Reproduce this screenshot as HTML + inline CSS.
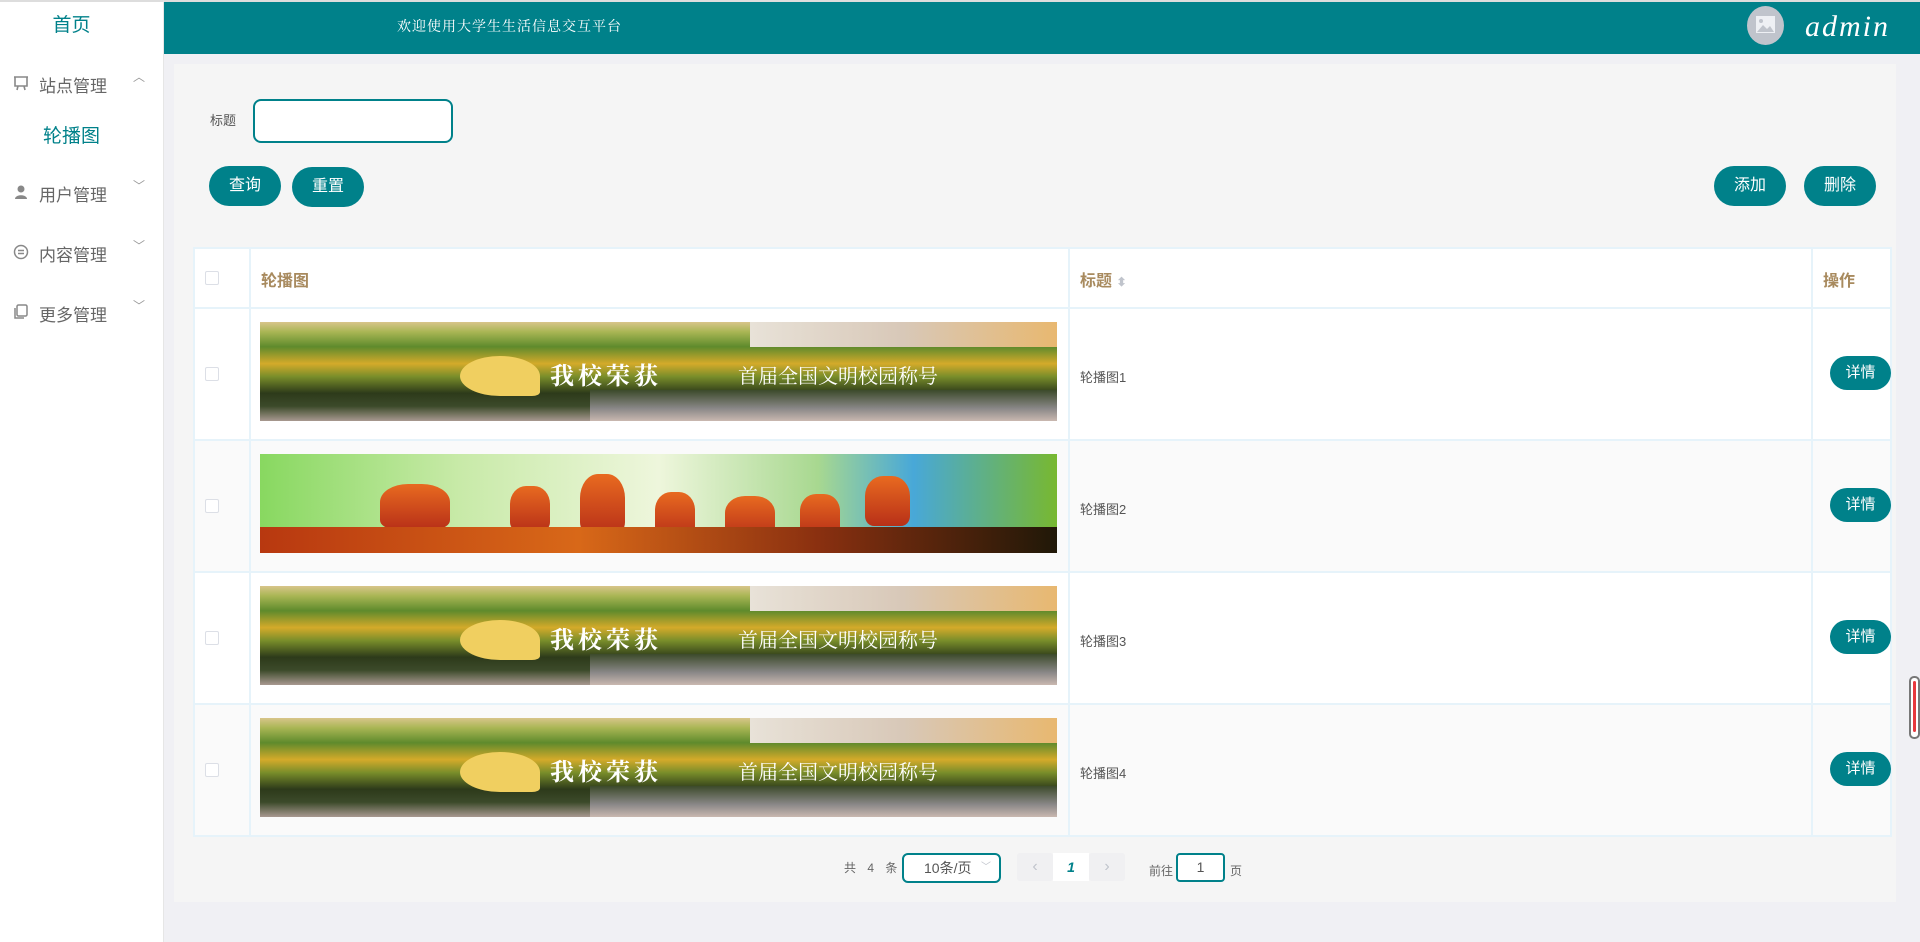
<!DOCTYPE html>
<html><head><meta charset="utf-8"><style>
*{margin:0;padding:0;box-sizing:border-box}
body{width:1920px;height:942px;overflow:hidden;background:#f0f0f4;font-family:"Liberation Sans","Noto Sans CJK SC",sans-serif;position:relative}
.a{position:absolute}
.side{left:0;top:0;width:164px;height:942px;background:#fff;border-right:1px solid #e6e6e6;border-top:2px solid #ddd}
.menu{left:0;width:164px;font-size:17px;color:#666}
.menu .ic{position:absolute;left:13px;top:3px;width:16px;height:16px}
.menu .t{position:absolute;left:39px;top:0}
.menu .ar{position:absolute;left:133px;top:-4px;font-size:12px;color:#999}
.hdr{left:164px;top:0;width:1756px;height:54px;background:#00818a;border-top:2px solid #ddd}
.btn{position:absolute;background:#00818a;color:#fff;border-radius:20px;font-size:16px;text-align:center;line-height:40px;width:72px;height:40px}
.panel{left:174px;top:64px;width:1722px;height:838px;background:#f5f5f5}
.tbl{left:193px;top:247px;width:1699px;border:2px solid #e6f3fa;background:#fff}
.row{position:absolute;left:0;width:1695px;border-bottom:2px solid #e6f3fa}
.vl{position:absolute;top:0;width:2px;height:100%;background:#e6f3fa}
.cb{position:absolute;left:12px;width:14px;height:14px;border:1px solid #dcdfe6;border-radius:2px;background:#fff}
.img{position:absolute;left:65px;width:797px;height:99px;overflow:hidden}
.campus{background:linear-gradient(180deg,#d8c58a 0%,#a9b654 10%,#5f8a2c 25%,#d4aa2a 42%,#7a8e2a 55%,#2d3a1a 72%,#3c4a2a 85%,#a89890 100%)}
.campus .gk{position:absolute;left:200px;top:34px;width:80px;height:40px;background:#f0cf60;border-radius:50% 50% 10% 50%}
.campus .tx{position:absolute;left:290px;top:34px;color:#fff;font-family:"Liberation Serif","Noto Serif CJK SC",serif;font-size:24px;font-weight:bold;letter-spacing:4px;white-space:nowrap}
.campus .tx2{position:absolute;left:478px;top:38px;color:#fff;font-family:"Liberation Serif","Noto Serif CJK SC",serif;font-size:20px;white-space:nowrap}
.campus .bld{position:absolute;left:490px;top:0;width:307px;height:25px;background:linear-gradient(90deg,#e8e2d8,#d8c8b8,#e8b870)}
.campus .water{position:absolute;left:330px;top:68px;width:467px;height:31px;background:linear-gradient(180deg,#3c4a2a,#8a8888 60%,#c9b8b0)}
.jump{background:linear-gradient(90deg,#88d860 0%,#c8eaa8 25%,#eef6dc 50%,#a8d890 70%,#48a8d8 82%,#78b830 100%)}
.jump .g{position:absolute;left:0;bottom:0;width:797px;height:26px;background:linear-gradient(90deg,#b83810,#d86818 40%,#8a3010 70%,#201808)}
.jump .p{position:absolute;background:linear-gradient(180deg,#e86a20,#b83018);border-radius:40% 40% 20% 20%}
.title{position:absolute;left:880px;font-size:13px;color:#555}
.det{position:absolute;left:1635px;width:61px;height:34px;border-radius:17px;background:#00818a;color:#fff;font-size:15px;line-height:34px;text-align:center}
.th{position:absolute;top:18px;font-size:16px;color:#a88a5e;font-weight:bold}
</style></head><body>
<div class="a side"></div>
<div class="a" style="left:0;top:10px;width:143px;text-align:center;font-size:19px;color:#00818a">首页</div>
<div class="a menu" style="top:72px">
<svg class="ic" viewBox="0 0 16 16"><path d="M1 2h14M2 2v9h12V2M5 11l-1 4M11 11l1 4" stroke="#888" stroke-width="1.6" fill="none"/></svg>
<span class="t">站点管理</span><span class="ar">︿</span></div>
<div class="a" style="left:0;top:121px;width:143px;text-align:center;font-size:19px;color:#00818a">轮播图</div>
<div class="a menu" style="top:181px">
<svg class="ic" viewBox="0 0 16 16"><circle cx="8" cy="5" r="3.5" fill="#888"/><path d="M2 15c0-5 12-5 12 0z" fill="#888"/></svg>
<span class="t">用户管理</span><span class="ar">﹀</span></div>
<div class="a menu" style="top:241px">
<svg class="ic" viewBox="0 0 16 16"><circle cx="8" cy="8" r="6.5" stroke="#888" stroke-width="1.5" fill="none"/><path d="M5 6.5h6M5 9.5h6" stroke="#888" stroke-width="1.4"/></svg>
<span class="t">内容管理</span><span class="ar">﹀</span></div>
<div class="a menu" style="top:301px">
<svg class="ic" viewBox="0 0 16 16"><rect x="4" y="1" width="10" height="11" rx="1.5" stroke="#888" stroke-width="1.5" fill="none"/><path d="M2 4v10h9" stroke="#888" stroke-width="1.5" fill="none"/></svg>
<span class="t">更多管理</span><span class="ar">﹀</span></div>

<div class="a hdr"></div>
<div class="a" style="left:397px;top:16px;color:#fff;font-size:14px;font-family:'Liberation Serif','Noto Serif CJK SC',serif;letter-spacing:1px">欢迎使用大学生生活信息交互平台</div>
<div class="a" style="left:1747px;top:6px;width:37px;height:39px;border-radius:50%;background:#c0c4cc"></div>
<svg class="a" style="left:1756px;top:16px" width="19" height="17" viewBox="0 0 19 17"><rect width="19" height="17" fill="#eef0f4"/><circle cx="5" cy="5" r="2" fill="#c0c4cc"/><path d="M1 16l6-7 4 4 3-3 4 6z" fill="#c0c4cc"/></svg>
<div class="a" style="left:1805px;top:10px;color:#fff;font-size:30px;font-style:italic;font-family:'Liberation Serif',serif;letter-spacing:2px">admin</div>

<div class="a panel"></div>
<div class="a" style="left:210px;top:110px;font-size:13px;color:#555">标题</div>
<div class="a" style="left:253px;top:99px;width:200px;height:44px;border:2px solid #00818a;border-radius:8px;background:#fff"></div>
<div class="btn" style="left:209px;top:166px">查询</div>
<div class="btn" style="left:292px;top:167px">重置</div>
<div class="btn" style="left:1714px;top:166px">添加</div>
<div class="btn" style="left:1804px;top:166px">删除</div>

<div class="a tbl" style="height:590px">
 <div class="row" style="top:0;height:60px;background:#fff"><div class="cb" style="top:22px;left:10px"></div><div class="vl" style="left:54px"></div><div class="vl" style="left:873px"></div><div class="vl" style="left:1616px"></div>
 <div class="th" style="left:66px">轮播图</div><div class="th" style="left:885px">标题 <span style="color:#c0c4cc;font-size:12px">⬍</span></div><div class="th" style="left:1628px">操作</div></div>

 <div class="row" style="top:60px;height:132px;background:#fff"><div class="cb" style="top:58px;left:10px"></div><div class="vl" style="left:54px"></div><div class="vl" style="left:873px"></div><div class="vl" style="left:1616px"></div>
 <div class="img campus" style="top:13px"><div class="bld"></div><div class="water"></div><div class="gk"></div><div class="tx">我校荣获</div><div class="tx2">首届全国文明校园称号</div></div>
 <div class="title" style="top:58px;left:885px">轮播图1</div><div class="det" style="top:47px">详情</div></div>

 <div class="row" style="top:192px;height:132px;background:#fafafa"><div class="cb" style="top:58px;left:10px"></div><div class="vl" style="left:54px"></div><div class="vl" style="left:873px"></div><div class="vl" style="left:1616px"></div>
 <div class="img jump" style="top:13px"><div class="p" style="left:120px;top:30px;width:70px;height:45px"></div><div class="p" style="left:250px;top:32px;width:40px;height:45px"></div><div class="p" style="left:320px;top:20px;width:45px;height:60px"></div><div class="p" style="left:395px;top:38px;width:40px;height:45px"></div><div class="p" style="left:465px;top:42px;width:50px;height:42px"></div><div class="p" style="left:540px;top:40px;width:40px;height:42px"></div><div class="p" style="left:605px;top:22px;width:45px;height:50px"></div><div class="g"></div></div>
 <div class="title" style="top:58px;left:885px">轮播图2</div><div class="det" style="top:47px">详情</div></div>

 <div class="row" style="top:324px;height:132px;background:#fff"><div class="cb" style="top:58px;left:10px"></div><div class="vl" style="left:54px"></div><div class="vl" style="left:873px"></div><div class="vl" style="left:1616px"></div>
 <div class="img campus" style="top:13px"><div class="bld"></div><div class="water"></div><div class="gk"></div><div class="tx">我校荣获</div><div class="tx2">首届全国文明校园称号</div></div>
 <div class="title" style="top:58px;left:885px">轮播图3</div><div class="det" style="top:47px">详情</div></div>

 <div class="row" style="top:456px;height:132px;background:#fafafa"><div class="cb" style="top:58px;left:10px"></div><div class="vl" style="left:54px"></div><div class="vl" style="left:873px"></div><div class="vl" style="left:1616px"></div>
 <div class="img campus" style="top:13px"><div class="bld"></div><div class="water"></div><div class="gk"></div><div class="tx">我校荣获</div><div class="tx2">首届全国文明校园称号</div></div>
 <div class="title" style="top:58px;left:885px">轮播图4</div><div class="det" style="top:47px">详情</div></div>
</div>

<div class="a" style="left:844px;top:859px;font-size:12px;color:#666;letter-spacing:4px">共 4 条</div>
<div class="a" style="left:902px;top:853px;width:99px;height:30px;border:2px solid #00818a;border-radius:6px;background:#fff;font-size:14px;color:#555;line-height:26px;padding-left:20px">10条/页<span style="position:absolute;right:8px;color:#c0c4cc;font-size:10px">﹀</span></div>
<div class="a" style="left:1017px;top:853px;width:36px;height:28px;background:#f0f0f2;border-radius:3px;color:#c0c4cc;text-align:center;line-height:28px">‹</div>
<div class="a" style="left:1053px;top:853px;width:36px;height:28px;background:#fff;color:#00818a;text-align:center;line-height:28px;font-weight:bold;font-style:italic;font-size:14px">1</div>
<div class="a" style="left:1089px;top:853px;width:36px;height:28px;background:#f0f0f2;border-radius:3px;color:#c0c4cc;text-align:center;line-height:28px">›</div>
<div class="a" style="left:1149px;top:862px;font-size:12px;color:#666">前往</div>
<div class="a" style="left:1176px;top:853px;width:49px;height:29px;border:2px solid #00818a;border-radius:4px;background:#fff;text-align:center;line-height:25px;font-size:14px;color:#555">1</div>
<div class="a" style="left:1230px;top:862px;font-size:12px;color:#666">页</div>

<div class="a" style="left:1909px;top:676px;width:11px;height:63px;border:2px solid #777;border-radius:5px;background:#fff"><div style="margin:3px 2px;height:51px;background:#e8383d;border-radius:2px"></div></div>
</body></html>
